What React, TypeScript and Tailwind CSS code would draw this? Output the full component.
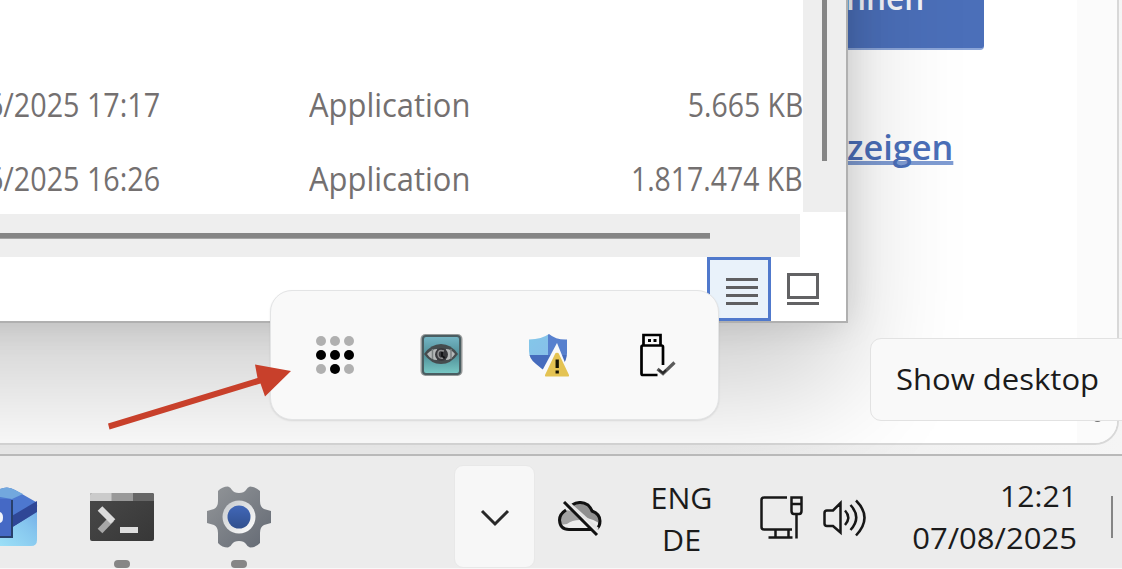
import React from 'react';

const files = [
  { date: '6/2025 17:17', type: 'Application', size: '5.665 KB' },
  { date: '6/2025 16:26', type: 'Application', size: '1.817.474 KB' },
];

function BrowserWindow() {
  return (
    <section className="absolute top-0 left-0 flex h-[445px] w-[1119px] overflow-hidden rounded-br-[24px] border-r-2 border-b-2 border-[#d8d8d8] bg-white">
      <div className="flex grow flex-col items-start pl-[780px]">
        <div className="flex h-[50px] w-[204px] items-start rounded-br-[4px] border-b-2 border-[#8ba5d8] bg-[#4b6fb9] pl-[66px]">
          <span className="-mt-[27px] origin-left scale-x-[0.9] text-[35px] leading-[48px] font-semibold whitespace-nowrap text-[#f3f5fa]">nnen</span>
        </div>
        <div className="mt-[73px] ml-[67px] h-[41px] w-[107px]">
          <span className="block w-[111px] origin-left scale-x-[0.98] text-[35px] leading-[48px] font-semibold text-[#4b6fb9] underline decoration-[#7f9cd3] decoration-[4px] underline-offset-[1px] [text-decoration-skip-ink:none]">zeigen</span>
        </div>
      </div>
      <div className="flex w-[40px] items-end bg-[#fbfbfb]">
        <div className="mb-[21px] ml-[17px] h-[3px] w-[7px] rounded-b bg-[#777]" />
      </div>
    </section>
  );
}

function ExplorerWindow() {
  return (
    <>
      <div className="absolute -top-[300px] -left-[300px] h-[622px] w-[1148px] shadow-[0_70px_110px_rgba(0,0,0,0.19),0_0_34px_rgba(0,0,0,0.13)]" />
      <section className="absolute top-0 left-0 flex h-[323px] w-[848px] flex-col overflow-hidden border-r-2 border-b-2 border-[#b0b0b0] bg-white">
        <div className="flex h-[212px] shrink-0">
          <div className="flex w-[803px] flex-col overflow-hidden pt-[67px]">
            {files.map((file) => (
              <div key={file.date} className="flex h-[74.5px] shrink-0 items-center text-[33px] whitespace-nowrap text-[#747070]">
                <div className="flex w-[160px] justify-end">
                  <span className="origin-right scale-x-[0.87]">{file.date}</span>
                </div>
                <div className="w-[341px] pl-[149px]">
                  <span className="inline-block origin-left scale-x-[0.937]">{file.type}</span>
                </div>
                <div className="flex w-[302px] justify-end">
                  <span className="origin-right scale-x-[0.86]">{file.size}</span>
                </div>
              </div>
            ))}
          </div>
          <div className="flex w-[43px] items-start bg-[#eee] pl-[19px]">
            <div className="h-[161px] w-[5px] bg-[#858585]" />
          </div>
        </div>
        <div className="mt-[2px] flex h-[43px] w-[800px] shrink-0 items-center bg-[#eee]">
          <div className="h-[6px] w-[710px] border-b border-[#a5a5a5] bg-[#858585]" />
        </div>
        <div className="flex h-[64px] shrink-0 pl-[707px]">
          <div className="flex h-[64px] w-[64px] flex-col items-end gap-[5px] border-[3px] border-[#5079cc] bg-[#e9f2fa] pt-[18px] pr-[10px]">
            <i className="h-[3px] w-[32px] bg-[#5f5f61]" />
            <i className="h-[3px] w-[32px] bg-[#5f5f61]" />
            <i className="h-[3px] w-[32px] bg-[#5f5f61]" />
            <i className="h-[3px] w-[32px] bg-[#5f5f61]" />
          </div>
          <div className="flex flex-col gap-[3px] pt-[16px] pl-[16px]">
            <div className="h-[26px] w-[32px] border-[3px] border-[#626264]" />
            <div className="h-[3px] w-[32px] bg-[#626264]" />
          </div>
        </div>
      </section>
    </>
  );
}

function DotsIcon() {
  const dark = [3, 4, 5, 7];
  return (
    <div className="grid w-[38px] grid-cols-3 gap-[4px]">
      {Array.from({ length: 9 }, (_, i) => (
        <i key={i} className={dark.includes(i) ? 'size-[10px] rounded-full bg-black' : 'size-[10px] rounded-full bg-[#b0b0b0]'} />
      ))}
    </div>
  );
}

function EyeIcon() {
  return (
    <svg width="43" height="44" viewBox="0 0 43 44">
      <defs>
        <linearGradient id="teal" x1="0" y1="0" x2="0" y2="1">
          <stop offset="0" stopColor="#76b7c6" />
          <stop offset="0.5" stopColor="#508f98" />
          <stop offset="1" stopColor="#7acac6" />
        </linearGradient>
      </defs>
      <rect x="0.5" y="1" width="42" height="42" rx="5" fill="#979a9a" />
      <rect x="3" y="3" width="37" height="38" rx="3" fill="url(#teal)" stroke="#4a5d61" strokeWidth="2" />
      <path d="M4 21Q11 11 21 11Q31 11 38 21Q31 31 21 31Q11 31 4 21Z" fill="#454c4e" />
      <path d="M7 21Q12 16 17 16V27Q11 27 7 21ZM35 21Q31 16 26 16V27Q31 27 35 21Z" fill="#b5b8b9" />
      <path d="M12.500 16V26M31 16V26" stroke="#7b8081" strokeWidth="1.500" />
      <circle cx="21.5" cy="21.5" r="6.5" fill="#39393d" />
      <path d="M24 18Q18 16 18 21Q18 26 23 25" fill="none" stroke="#8e8e90" strokeWidth="1.5" />
      <path d="M22 19V23L25 25" fill="none" stroke="#151518" strokeWidth="2" />
    </svg>
  );
}

function ShieldIcon() {
  return (
    <svg width="41" height="44" viewBox="0 0 41 44">
      <defs>
        <linearGradient id="shieldLight" x1="0" y1="0" x2="1" y2="1">
          <stop stopColor="#83c8e9" />
          <stop offset="1" stopColor="#87bfe9" />
        </linearGradient>
        <clipPath id="shield">
          <path d="M20 1Q27 7 38 6.500V20Q38 34 20 40Q12 36 7 31Q0 26 0 18V6.500Q13 6 20 1Z" />
        </clipPath>
      </defs>
      <g clipPath="url(#shield)">
        <rect width="19" height="22" fill="url(#shieldLight)" />
        <rect x="19" width="19" height="22" fill="#5780ce" />
        <rect y="22" width="38" height="20" fill="#466cbd" />
      </g>
      <path d="M28 10L41 42H14L13 38Z" fill="#f9f9f9" />
      <path d="M28 20Q29 19 30 21L40 42Q40.500 43.500 39 43.500H17Q15.500 43.500 16 42L26 21Q27 19 28 20Z" fill="#e4c353" />
      <path d="M28.200 26.500V35M28.200 37.500V40.500" stroke="#171505" strokeWidth="3.300" />
    </svg>
  );
}

function UsbIcon() {
  return (
    <svg width="36" height="44" viewBox="0 0 36 44" fill="none">
      <path d="M3.500 12V2H20.500V12" stroke="#000" strokeWidth="2.700" />
      <path d="M17.500 42H3Q1.500 42 1.500 40.500V14Q1.500 12.500 3 12.500H21.500Q23 12.500 23 14V32" stroke="#000" strokeWidth="2.700" />
      <path d="M8 7.500H11M13.500 7.500H16.500" stroke="#000" strokeWidth="3" />
      <path d="M17.500 36L23 40.500L34.500 29.500" stroke="#5b5b5b" strokeWidth="3.200" />
      <path d="M19 37L23 40L26 37" stroke="#292929" strokeWidth="2" />
    </svg>
  );
}

function TrayFlyout() {
  return (
    <section className="absolute top-[290px] left-[270px] flex h-[130px] w-[449px] items-center rounded-[22px] border-[1.5px] border-[#e3e4e5] bg-[#f9f9f9] pl-[45px] shadow-[0_1px_2px_rgba(0,0,0,0.1)]">
      <div className="w-[104px]"><DotsIcon /></div>
      <div className="w-[109px]"><EyeIcon /></div>
      <div className="w-[111px]"><ShieldIcon /></div>
      <UsbIcon />
    </section>
  );
}

function Arrow() {
  return (
    <svg className="absolute top-[360px] left-[105px]" width="190" height="74" viewBox="105 360 190 74">
      <path d="M108 423.500L257.500 378L255 364.500L291 371L265 396.500L260.500 383.500L109.500 429.500Z" fill="#c8402b" />
    </svg>
  );
}

function MailIcon() {
  return (
    <svg width="38" height="62" viewBox="0 485 38 62">
      <defs>
        <linearGradient id="mail" x1="0" y1="1" x2="1" y2="0">
          <stop stopColor="#9ce0f7" />
          <stop offset="0.650" stopColor="#86c6ee" />
          <stop offset="1" stopColor="#76afe8" />
        </linearGradient>
      </defs>
      <path d="M0 489Q8 485.500 15 490L36 502Q37.500 504 37 507L10 529H0Z" fill="#4d78cf" />
      <path d="M0 489Q8 485.500 15 490L23 494L12 499L0 497Z" fill="#72a8de" />
      <path d="M0 523L37 501V513L10 529H0Z" fill="#2f4796" />
      <path d="M0 533L13 527L37 512V540Q37 546 31 546H0Z" fill="url(#mail)" />
      <path d="M0 500H13V538H0Z" fill="#28406b" />
      <path d="M0 499H11V536H0Z" fill="#4569c5" />
      <path d="M0 512Q3 513 3 517.500Q3 522 0 523Z" fill="#f1f4fb" />
    </svg>
  );
}

function TerminalIcon() {
  return (
    <svg width="64" height="49" viewBox="0 0 64 49">
      <defs>
        <linearGradient id="term" x1="0" y1="0" x2="1" y2="1">
          <stop stopColor="#494949" />
          <stop offset="1" stopColor="#373737" />
        </linearGradient>
        <clipPath id="termFrame"><rect width="64" height="48" rx="2" /></clipPath>
      </defs>
      <g clipPath="url(#termFrame)">
        <rect width="64" height="48" fill="url(#term)" />
        <rect width="22" height="8" fill="#cbcbcb" />
        <rect x="21.500" width="21.500" height="8" fill="#999" />
        <rect x="43" width="21" height="8" fill="#666" />
      </g>
      <path d="M10 38L21.500 26" stroke="#a7a7a7" strokeWidth="6.500" />
      <path d="M10 15.500L23 28.500" stroke="#dcdcdc" strokeWidth="6.500" />
      <rect x="30" y="34" width="18" height="6" fill="#dedede" />
    </svg>
  );
}

function GearIcon() {
  return (
    <svg width="64" height="62" viewBox="0 0 64 62">
      <defs>
        <linearGradient id="gear" x1="0" y1="0" x2="1" y2="1">
          <stop stopColor="#939699" />
          <stop offset="1" stopColor="#636973" />
        </linearGradient>
        <linearGradient id="hub" x1="0" y1="0" x2="0" y2="1">
          <stop stopColor="#4167b8" />
          <stop offset="1" stopColor="#31508e" />
        </linearGradient>
        <linearGradient id="ring" x1="0" y1="0" x2="1" y2="1">
          <stop stopColor="#c6c9cc" />
          <stop offset="1" stopColor="#fff" />
        </linearGradient>
      </defs>
      <path d="M11 5Q15 0.500 21 0.500Q23.500 1 25 4Q27 7 32 7Q37 7 39 4Q40.500 1 43 0.500Q48 0.500 53 5V15Q53 21 57 23L64 25V37L57 39Q53 41 53 47V57Q49 61.500 43 61.500Q40.500 61 39 58Q37 55 32 55Q27 55 25 58Q23.500 61 21 61.500Q15 61.500 11 57V47Q11 41 7 39L0 37V25L7 23Q11 21 11 15Z" fill="url(#gear)" />
      <circle cx="32" cy="31" r="16.500" fill="url(#ring)" />
      <circle cx="32" cy="31" r="11.500" fill="url(#hub)" />
    </svg>
  );
}

function CloudOffIcon() {
  return (
    <svg width="44" height="36" viewBox="0 0 44 36" fill="none">
      <path d="M4 11Q8 8 13 10L22 19Q14 19 9 23L2 24Q0 16 4 11Z" fill="#a2a2a2" />
      <path d="M13 4Q22 -1 31 5L34 11L41 16V22Q34 18 26 16Z" fill="#909090" />
      <path d="M8 9Q1.500 13 1.500 19Q2 28.500 11 28.500H34" stroke="#111" strokeWidth="3" />
      <path d="M14 4Q22 -1 30 4Q33 7 34 10Q42 13 42 20Q42 25 39 27.500" stroke="#111" strokeWidth="3" />
      <path d="M12 3L40 28" stroke="#e4e4e4" strokeWidth="2.500" />
      <path d="M6 1L39 34" stroke="#111" strokeWidth="3" />
    </svg>
  );
}

function NetworkIcon() {
  return (
    <svg width="43" height="43" viewBox="0 0 43 43" fill="none" stroke="#171717" strokeWidth="2.500">
      <path d="M27 1.500H4Q1.500 1.500 1.500 4V31Q1.500 33.500 4 33.500H32" />
      <path d="M15.500 34V41M28.500 34V41M8.500 41.500H32.500M36.500 18V42.500" />
      <path d="M31.500 1.500H41.500V15Q41.500 18 39 18H34Q31.500 18 31.500 15ZM31.500 8H41.500" />
    </svg>
  );
}

function SpeakerIcon() {
  return (
    <svg width="44" height="38" viewBox="0 0 44 38" fill="none" stroke="#171717" strokeWidth="2.500">
      <path d="M17.500 4V33.500L10 27H4Q1.500 27 1.500 24.500V14Q1.500 11.500 4 11.500H10L17.500 4Z" />
      <path d="M22 11.500Q28.500 18.500 22 26" />
      <path d="M27.500 6Q39 18.500 27.500 31" />
      <path d="M33 1.500Q50 18.500 33 36.500" />
    </svg>
  );
}

function Taskbar() {
  return (
    <footer className="flex h-[115px] w-full items-start border-t-2 border-b border-t-[#b9b9b9] border-b-[#f8f8f8] bg-[#ececec]">
      <div className="w-[90px] pt-[29px]"><MailIcon /></div>
      <div className="flex w-[64px] flex-col items-center gap-[18px] pt-[37px]">
        <TerminalIcon />
        <div className="h-[8px] w-[16px] rounded-[4px] bg-[#868686]" />
      </div>
      <div className="ml-[53px] flex w-[64px] flex-col items-center gap-[12px] pt-[30px]">
        <GearIcon />
        <div className="h-[8px] w-[16px] rounded-[4px] bg-[#868686]" />
      </div>
      <div className="mt-[9px] ml-[183px] flex h-[103px] w-[81px] justify-center rounded-[9px] border border-[#e8e8e8] bg-[#f7f7f7] pt-[43px]">
        <svg width="30" height="18" viewBox="0 0 30 18" fill="none">
          <path d="M2 2L15 15L28 2" stroke="#292929" strokeWidth="3" />
        </svg>
      </div>
      <div className="ml-[23px] pt-[45px]"><CloudOffIcon /></div>
      <div className="ml-[40px] flex w-[80px] flex-col items-center pt-[21px] text-[29px] leading-[42px] text-[#1b1b1b]">
        <span className="scale-x-[1.05]">ENG</span>
        <span className="scale-x-[1.05]">DE</span>
      </div>
      <div className="ml-[38px] pt-[40px]"><NetworkIcon /></div>
      <div className="ml-[20px] pt-[43px]"><SpeakerIcon /></div>
      <div className="flex w-[210px] flex-col items-end pt-[19px] text-[29px] leading-[42px] text-[#1b1b1b]">
        <span className="origin-right scale-x-[1.04]">12:21</span>
        <span className="origin-right scale-x-[1.07]">07/08/2025</span>
      </div>
      <div className="mt-[40px] ml-[34px] h-[42px] w-[2px] bg-[#858585]" />
    </footer>
  );
}

export default function App() {
  return (
    <main className="relative flex h-[569px] w-[1122px] flex-col overflow-hidden bg-[#f4f4f4] font-['Open_Sans','Noto_Sans',sans-serif]">
      <div className="relative h-[454px] shrink-0 overflow-hidden bg-linear-to-r from-[#ececec] from-60% to-[#f5f5f5]">
        <BrowserWindow />
        <ExplorerWindow />
        <TrayFlyout />
        <div className="absolute top-[338px] left-[870px] flex h-[83px] w-[270px] items-center rounded-[11px] border-[1.5px] border-[#e2e2e2] bg-[#f9f9f9] pb-[2px] pl-[25px] text-[29px] whitespace-nowrap text-[#1b1b1b]">
          <span className="origin-left scale-x-[1.07]">Show desktop</span>
        </div>
        <Arrow />
      </div>
      <Taskbar />
    </main>
  );
}
